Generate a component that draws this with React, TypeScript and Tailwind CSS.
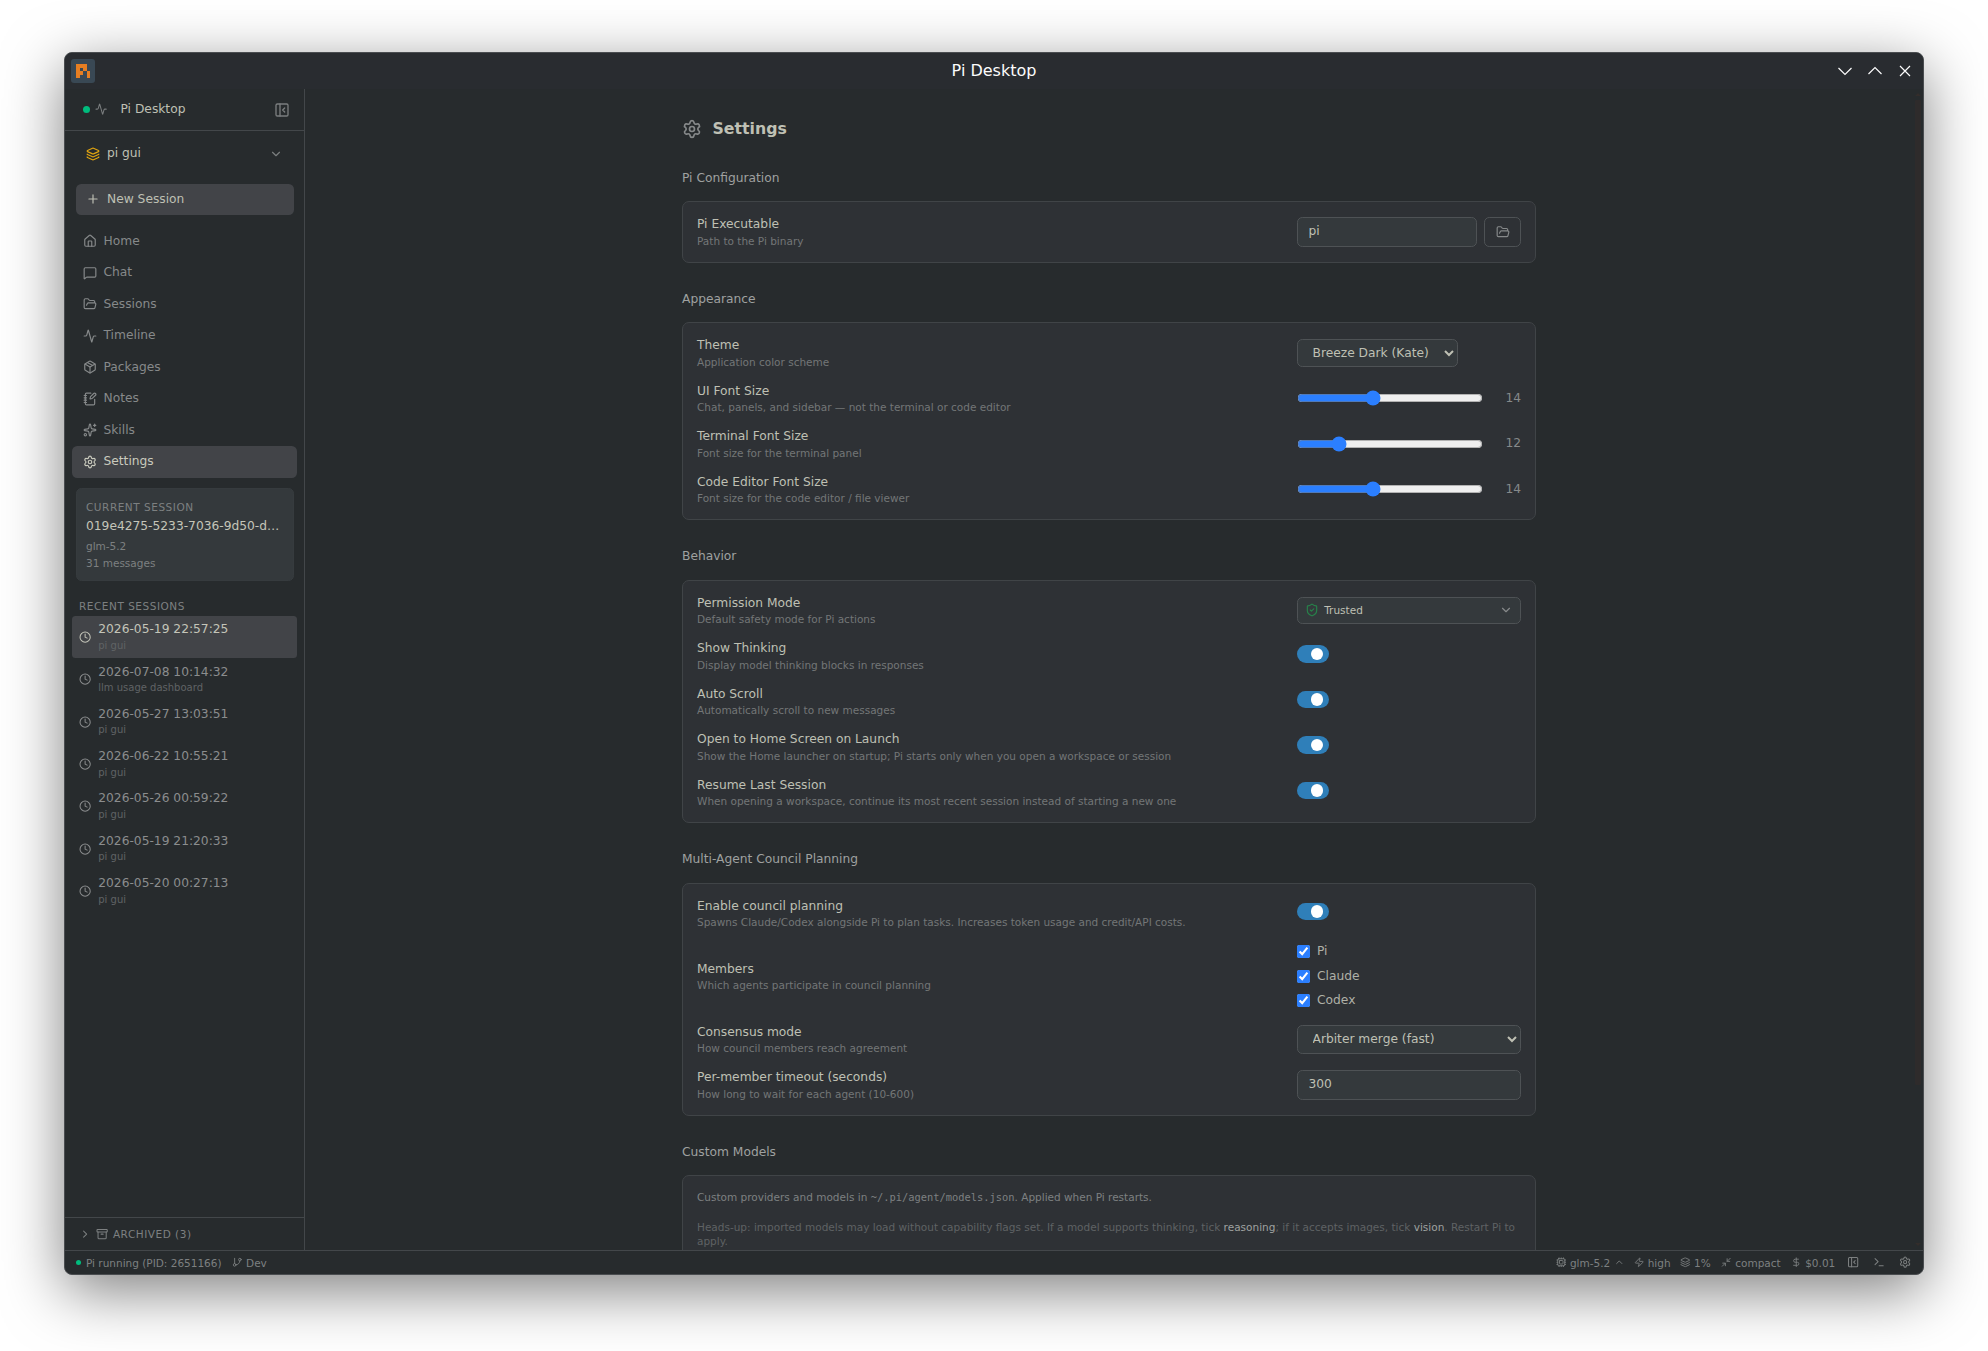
import React, { useLayoutEffect, useState } from "react";
import {
  Activity,
  Archive,
  ChevronDown,
  ChevronRight,
  ChevronUp,
  Clock,
  Cpu,
  DollarSign,
  FolderOpen,
  GitBranch,
  House,
  Layers,
  MessageSquare,
  Minimize2,
  NotebookPen,
  Package,
  PanelLeftClose,
  Plus,
  Settings,
  ShieldCheck,
  Sparkles,
  Terminal,
  Zap,
} from "lucide-react";

const navItems = [
  { label: "Home", icon: House },
  { label: "Chat", icon: MessageSquare },
  { label: "Sessions", icon: FolderOpen },
  { label: "Timeline", icon: Activity },
  { label: "Packages", icon: Package },
  { label: "Notes", icon: NotebookPen },
  { label: "Skills", icon: Sparkles },
  { label: "Settings", icon: Settings },
];

const recentSessions = [
  { title: "2026-05-19 22:57:25", workspace: "pi gui" },
  { title: "2026-07-08 10:14:32", workspace: "llm usage dashboard" },
  { title: "2026-05-27 13:03:51", workspace: "pi gui" },
  { title: "2026-06-22 10:55:21", workspace: "pi gui" },
  { title: "2026-05-26 00:59:22", workspace: "pi gui" },
  { title: "2026-05-19 21:20:33", workspace: "pi gui" },
  { title: "2026-05-20 00:27:13", workspace: "pi gui" },
];

function TitleBar() {
  return (
    <header className="flex h-[36px] shrink-0 items-center justify-between bg-[#292c30] pl-[6px] pr-[10px]">
      <div className="flex w-[94px]">
        <div className="flex size-[24px] items-center justify-center rounded-[3px] bg-[#394854]">
          <svg viewBox="0 0 4 4" className="size-[14px]" fill="#e67e22" shapeRendering="crispEdges">
            <path fillRule="evenodd" d="M0 0H3V2H2V3H1V4H0ZM1 1V2H2V1Z" />
            <path d="M3 2H4V4H3Z" />
          </svg>
        </div>
      </div>
      <h1 className="text-[16px] leading-none text-[#fcfcfc]">Pi Desktop</h1>
      <div className="flex w-[90px] justify-end gap-[14px] text-[#fcfcfc]">
        <svg viewBox="0 0 16 16" className="size-[16px]" fill="none" stroke="currentColor" strokeWidth="1.2">
          <path d="M1.5 5 8 11.5 14.5 5" />
        </svg>
        <svg viewBox="0 0 16 16" className="size-[16px]" fill="none" stroke="currentColor" strokeWidth="1.2">
          <path d="M1.5 11 8 4.5 14.5 11" />
        </svg>
        <svg viewBox="0 0 16 16" className="size-[16px]" fill="none" stroke="currentColor" strokeWidth="1.2">
          <path d="M3 3 13 13M13 3 3 13" />
        </svg>
      </div>
    </header>
  );
}

function Sidebar() {
  return (
    <aside className="flex w-[240px] shrink-0 flex-col border-r border-[#43474a]">
      <div className="flex h-[42px] shrink-0 items-center border-b border-[#43474a] pl-[18px] pr-[14px]">
        <span className="size-2 rounded-full bg-[#00bc7d]" />
        <Activity className="ml-1.5 size-3.5 text-[#7b7e7f]" />
        <span className="ml-[13px] flex-1 text-sm text-[#bfc0b4]">Pi Desktop</span>
        <PanelLeftClose className="size-[16px] text-[#7b7e7f]" />
      </div>

      <div className="px-3 py-2">
        <button className="flex w-full items-center gap-2 px-3 py-2 text-sm text-[#bfc0b4]">
          <Layers className="size-4 text-[#e0a410]" />
          <span className="flex-1 text-left">pi gui</span>
          <ChevronDown className="size-4 text-[#7b7e7f]" />
        </button>
      </div>

      <div className="px-3 py-2">
        <button className="flex w-full items-center gap-2 rounded-md bg-[#424448] px-3 py-2 text-sm text-[#bfc0b4]">
          <Plus className="size-4" />
          New Session
        </button>
      </div>

      <nav className="px-2 py-1">
        {navItems.map(({ label, icon: Icon }) => (
          <a
            key={label}
            className={
              label === "Settings"
                ? "flex items-center gap-2 rounded-md bg-[#424448] px-3 py-2 text-sm text-[#c9cabd]"
                : "flex items-center gap-2 rounded-md px-3 py-2 text-sm text-[#86898a]"
            }
          >
            <Icon className="size-4" />
            {label}
          </a>
        ))}
      </nav>

      <div className="mx-3 mt-2 h-[93px] rounded-md border border-[#363b3e] bg-[#34393c] px-[9.5px] pt-[10.5px] text-xs text-[#7d8081]">
        <p className="uppercase tracking-wider">Current Session</p>
        <p className="mt-[4.5px] truncate text-sm text-[#c4c5b9]">019e4275-5233-7036-9d50-d7a1c2e4f0b8</p>
        <p className="mt-1">glm-5.2</p>
        <p className="mt-[3px]">31 messages</p>
      </div>

      <div className="flex-1 px-2 pt-5">
        <p className="px-2 pb-1 text-xs uppercase tracking-wider text-[#7d8081]">Recent Sessions</p>
        {recentSessions.map((session, i) => (
          <div
            key={session.title}
            className={
              i === 0
                ? "flex h-[42.3px] items-center gap-2 rounded bg-[#424448] px-2 text-[#c4c5b9]"
                : "flex h-[42.3px] items-center gap-2 rounded px-2 text-[#8b8d8e]"
            }
          >
            <Clock className="size-3.5 shrink-0" />
            <div className="min-w-0">
              <p className="truncate text-sm">{session.title}</p>
              <p className="truncate text-[10px] leading-[14.3px] text-[#606365]">{session.workspace}</p>
            </div>
          </div>
        ))}
      </div>

      <div className="flex h-[33px] shrink-0 items-center gap-[4.7px] border-t border-[#43474a] px-4 text-xs text-[#7d8081]">
        <ChevronRight className="size-3.5" />
        <Archive className="size-3.5" />
        <span className="uppercase tracking-wider">Archived (3)</span>
      </div>
    </aside>
  );
}

type SectionProps = {
  title: string;
  children: React.ReactNode;
};

function Section({ title, children }: SectionProps) {
  return (
    <section className="mb-8">
      <h3 className="mb-4 text-sm text-[#9fa1a0]">{title}</h3>
      <div className="rounded-lg border border-[#404447] bg-[#2e3135] px-4 py-2">{children}</div>
    </section>
  );
}

type RowProps = {
  label: string;
  hint: string;
  children: React.ReactNode;
};

function Row({ label, hint, children }: RowProps) {
  return (
    <div className="flex min-h-[45.5px] items-center justify-between">
      <div>
        <p className="text-sm text-[#bfc0b4]">{label}</p>
        <p className="text-xs text-[#737677]">{hint}</p>
      </div>
      <div className="flex w-64 items-center">{children}</div>
    </div>
  );
}

function Toggle() {
  const [on, setOn] = useState(true);
  return (
    <button
      role="switch"
      aria-checked={on}
      onClick={() => setOn(!on)}
      className={
        on
          ? "mb-1 flex h-5 w-9 items-center rounded-full bg-[#2f7fb9]"
          : "mb-1 flex h-5 w-9 items-center rounded-full bg-[#43474a]"
      }
    >
      <span className={on ? "size-3.5 translate-x-4 rounded-full bg-white" : "size-3.5 translate-x-1 rounded-full bg-white"} />
    </button>
  );
}

type SliderProps = {
  value: number;
  onChange: (value: number) => void;
};

function Slider({ value, onChange }: SliderProps) {
  return (
    <>
      <input
        type="range"
        min={10}
        max={20}
        value={value}
        onChange={(e) => onChange(Number(e.target.value))}
        className="mr-3 min-w-0 flex-1 accent-blue-500"
      />
      <span className="w-8 text-right text-sm text-[#86898a]">{value}</span>
    </>
  );
}

function SettingsPage({ uiFontSize, setUiFontSize }: { uiFontSize: number; setUiFontSize: (value: number) => void }) {
  const [terminalFontSize, setTerminalFontSize] = useState(12);
  const [editorFontSize, setEditorFontSize] = useState(14);

  return (
    <main className="min-w-0 flex-1 overflow-hidden">
      <div className="mx-auto max-w-5xl px-6 py-8">
        <div className="mb-8 flex items-center gap-3">
          <Settings className="size-[20px] text-[#86898a]" />
          <h2 className="text-lg font-bold text-[#bfc0b4]">Settings</h2>
        </div>

        <Section title="Pi Configuration">
          <Row label="Pi Executable" hint="Path to the Pi binary">
            <div className="flex w-full gap-2">
              <input
                defaultValue="pi"
                className="min-w-0 flex-1 rounded-md border border-[#4e5255] bg-[#34393c] px-3 py-[5px] text-sm text-[#bfc0b4]"
              />
              <button className="flex items-center rounded-md border border-[#4e5255] px-3 text-[#86898a]">
                <FolderOpen className="size-4" />
              </button>
            </div>
          </Row>
        </Section>

        <Section title="Appearance">
          <Row label="Theme" hint="Application color scheme">
            <select className="h-[28px] w-[161px] rounded-md border border-[#4e5255] bg-[#34393c] px-3 text-sm text-[#bfc0b4]">
              <option>Breeze Dark (Kate)</option>
            </select>
          </Row>
          <Row label="UI Font Size" hint="Chat, panels, and sidebar — not the terminal or code editor">
            <Slider value={uiFontSize} onChange={setUiFontSize} />
          </Row>
          <Row label="Terminal Font Size" hint="Font size for the terminal panel">
            <Slider value={terminalFontSize} onChange={setTerminalFontSize} />
          </Row>
          <Row label="Code Editor Font Size" hint="Font size for the code editor / file viewer">
            <Slider value={editorFontSize} onChange={setEditorFontSize} />
          </Row>
        </Section>

        <Section title="Behavior">
          <Row label="Permission Mode" hint="Default safety mode for Pi actions">
            <button className="flex h-[27px] w-full items-center gap-1.5 rounded-md border border-[#4e5255] bg-[#34393c] px-2 text-xs text-[#bfc0b4]">
              <ShieldCheck className="size-4 text-[#27824a]" />
              <span className="flex-1 text-left">Trusted</span>
              <ChevronDown className="size-4 text-[#86898a]" />
            </button>
          </Row>
          <Row label="Show Thinking" hint="Display model thinking blocks in responses">
            <Toggle />
          </Row>
          <Row label="Auto Scroll" hint="Automatically scroll to new messages">
            <Toggle />
          </Row>
          <Row
            label="Open to Home Screen on Launch"
            hint="Show the Home launcher on startup; Pi starts only when you open a workspace or session"
          >
            <Toggle />
          </Row>
          <Row
            label="Resume Last Session"
            hint="When opening a workspace, continue its most recent session instead of starting a new one"
          >
            <Toggle />
          </Row>
        </Section>

        <Section title="Multi-Agent Council Planning">
          <Row
            label="Enable council planning"
            hint="Spawns Claude/Codex alongside Pi to plan tasks. Increases token usage and credit/API costs."
          >
            <Toggle />
          </Row>
          <Row label="Members" hint="Which agents participate in council planning">
            <div className="flex flex-col gap-2 py-2">
              {["Pi", "Claude", "Codex"].map((name) => (
                <label key={name} className="flex items-center gap-2 text-sm text-[#afb0a7]">
                  <input type="checkbox" defaultChecked className="size-[13px] accent-blue-500" />
                  {name}
                </label>
              ))}
            </div>
          </Row>
          <Row label="Consensus mode" hint="How council members reach agreement">
            <select className="h-[29px] w-full rounded-md border border-[#4e5255] bg-[#34393c] px-3 text-sm text-[#bfc0b4]">
              <option>Arbiter merge (fast)</option>
            </select>
          </Row>
          <Row label="Per-member timeout (seconds)" hint="How long to wait for each agent (10-600)">
            <input
              defaultValue="300"
              className="w-full rounded-md border border-[#4e5255] bg-[#34393c] px-3 py-[5px] text-sm text-[#bfc0b4]"
            />
          </Row>
        </Section>

        <Section title="Custom Models">
          <div className="py-2 text-xs">
            <p className="text-[#7d8081]">
              Custom providers and models in{" "}
              <code className="font-['DejaVu_Sans_Mono',monospace] text-[10.4px]">~/.pi/agent/models.json</code>. Applied
              when Pi restarts.
            </p>
            <p className="mt-[15px] text-[#5f6264]">
              Heads-up: imported models may load without capability flags set. If a model supports thinking, tick{" "}
              <span className="text-[#9fa1a0]">reasoning</span>; if it accepts images, tick{" "}
              <span className="text-[#9fa1a0]">vision</span>. Restart Pi to apply.
            </p>
          </div>
        </Section>
      </div>
    </main>
  );
}

function Scrollbar() {
  return (
    <div className="flex w-[10px] shrink-0 flex-col items-center pt-[4px] pb-[4px]">
      <span className="border-x-[3px] border-b-[3px] border-x-transparent border-b-[#332d2b]" />
      <span className="mt-[4px] h-[985px] w-[6px] rounded-[1px] bg-[#2e2b2b]" />
      <span className="mt-auto border-x-[3px] border-t-[3px] border-x-transparent border-t-[#332d2b]" />
    </div>
  );
}

function StatusBar() {
  return (
    <footer className="flex h-[24px] shrink-0 items-center border-t border-[#43474a] pl-3 pr-[11.5px] text-xs text-[#7d8081]">
      <span className="mr-1.5 size-1.5 rounded-full bg-[#00bc7d]" />
      <span>Pi running (PID: 2651166)</span>
      <GitBranch className="ml-3 mr-1 size-3" />
      <span className="flex-1">Dev</span>

      <div className="flex items-center gap-3">
        <span className="flex items-center gap-1">
          <Cpu className="size-3" />
          glm-5.2
          <ChevronUp className="size-3" />
        </span>
        <span className="-ml-px flex items-center gap-1">
          <Zap className="size-3" />
          high
        </span>
        <span className="-ml-px flex items-center gap-1">
          <Layers className="size-3" />
          1%
        </span>
        <span className="flex items-center gap-1">
          <Minimize2 className="size-3" />
          compact
        </span>
        <span className="flex items-center gap-1">
          <DollarSign className="size-3" />
          $0.01
        </span>
        <span className="ml-px flex items-center gap-4">
          <PanelLeftClose className="size-3.5" />
          <Terminal className="size-3.5" />
          <Settings className="size-3.5" />
        </span>
      </div>
    </footer>
  );
}

export default function App() {
  const [uiFontSize, setUiFontSize] = useState(14);

  // Every rem based size follows the UI font size setting
  useLayoutEffect(() => {
    document.documentElement.style.fontSize = `${uiFontSize}px`;
  }, [uiFontSize]);

  return (
    <div className="h-[1351px] w-[1988px] overflow-hidden bg-white pl-[64px] pt-[52px] font-['DejaVu_Sans',sans-serif]">
      <div className="flex h-[1223px] w-[1860px] flex-col overflow-hidden rounded-[8px] border border-[#4a4d50] bg-[#272b2d] shadow-[0_16px_60px_rgba(0,0,0,0.5)]">
        <TitleBar />
        <div className="flex min-h-0 flex-1">
          <Sidebar />
          <SettingsPage uiFontSize={uiFontSize} setUiFontSize={setUiFontSize} />
          <Scrollbar />
        </div>
        <StatusBar />
      </div>
    </div>
  );
}
